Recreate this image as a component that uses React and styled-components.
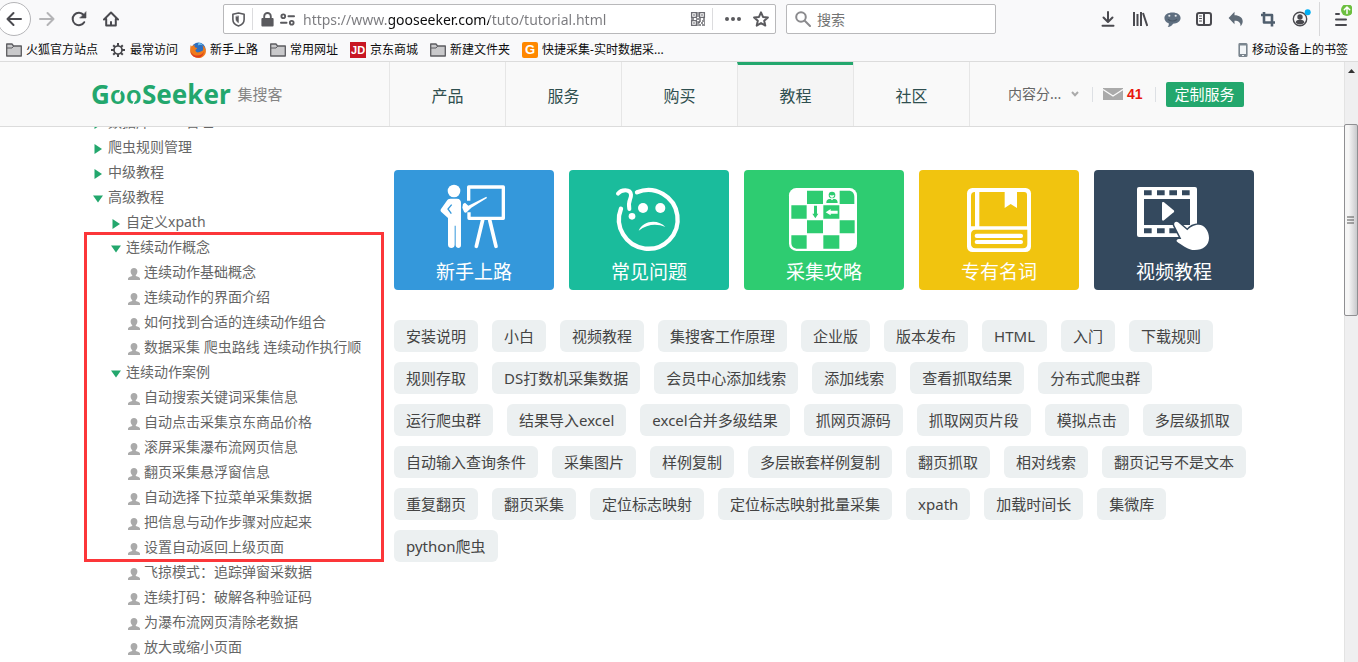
import React from "react";
import styled, { createGlobalStyle, css } from "styled-components";

const green = "#23a76d";
const uiFont = '"Noto Sans", "Noto Sans CJK SC", sans-serif';

const GlobalStyle = createGlobalStyle`
  *, *::before, *::after { box-sizing: border-box; }
  body { margin: 0; background: #fff; font-family: ${uiFont}; }
  a { color: inherit; text-decoration: none; }
  ul { list-style: none; margin: 0; padding: 0; }
  button, input, select { font-family: inherit; margin: 0; }
`;

/* ---------- browser window ---------- */

const Window = styled.div`
  display: flex;
  flex-direction: column;
  height: 100vh;
  overflow: hidden;
`;

const Toolbar = styled.div`
  display: flex;
  align-items: center;
  height: 38px;
  flex: none;
  background: #f9f9fa;
`;

const ToolButton = styled.button`
  display: flex;
  align-items: center;
  justify-content: center;
  flex: none;
  width: ${(p) => p.$width || 32}px;
  height: 34px;
  padding: 0;
  border: 0;
  background: none;
  color: ${(p) => p.$color || "#4a4a4f"};
`;

const BackButton = styled(ToolButton)`
  border: 1px solid #b5b5b8;
  border-radius: 50%;
  width: 34px;
  margin-left: -3px;
  background: #fff;
`;

const Spacer = styled.div`
  flex: 0 1 96px;
`;

const Field = styled.div`
  display: flex;
  align-items: center;
  flex: ${(p) => (p.$fixed ? "0 0 210px" : "1 1 auto")};
  min-width: 0;
  height: 30px;
  border: 1px solid #b8b8ba;
  border-radius: 2px;
  background: #fff;
  color: #5a5a5e;
  padding: 0 0 0 6px;
  margin-left: ${(p) => (p.$fixed ? 10 : 0)}px;
`;

const FieldIcon = styled.span`
  display: flex;
  justify-content: center;
  flex: none;
  width: ${(p) => p.$width || 16}px;
`;

const FieldRule = styled.span`
  flex: none;
  width: 1px;
  height: 22px;
  background: #dcdcde;
  margin: 0 6px;
`;

const TextInput = styled.input`
  flex: 1;
  min-width: 0;
  height: 28px;
  padding: 0;
  border: 0;
  outline: 0;
  background: none;
  font-size: 14px;
  &::placeholder { color: #737373; opacity: 1; }
`;

const UrlInput = styled(TextInput)`
  margin-left: 4px;
  color: transparent;
  background: linear-gradient(90deg, #7a7a7e 86px, #0c0c0d 86px, #0c0c0d 186px, #7a7a7e 186px);
  background-clip: text;
  -webkit-background-clip: text;
`;

const ToolRule = styled.span`
  width: 1px;
  height: 34px;
  margin: 0 4px 0 3px;
  background: #d8d8da;
`;

const BookmarksBar = styled.nav`
  display: flex;
  align-items: center;
  gap: 12px;
  flex: none;
  height: 24px;
  padding: 0 10px 0 6px;
  background: #f9f9fa;
  border-bottom: 1px solid #dcdcdc;
  font-size: 12px;
  line-height: 18px;
  color: #0c0c0d;
`;

const Bookmark = styled.a`
  display: flex;
  align-items: center;
  gap: 4px;
  white-space: nowrap;
  margin-left: ${(p) => (p.$end ? "auto" : 0)};
`;

const LetterIcon = styled.span`
  width: 16px;
  height: 16px;
  border-radius: ${(p) => p.$radius}px;
  background: ${(p) => p.$bg};
  color: #fff;
  font: bold ${(p) => p.$size}px/16px "Liberation Sans", sans-serif;
  text-align: center;
`;

const Viewport = styled.div`
  display: flex;
  flex: 1;
  min-height: 0;
`;

const Page = styled.div`
  display: flex;
  flex-direction: column;
  flex: 1;
  min-width: 0;
  background: #fff;
`;

const ScrollTrack = styled.div`
  display: flex;
  flex-direction: column;
  flex: none;
  width: 14px;
  background: #efeff0;
  border-left: 1px solid #e3e3e3;
`;

const ScrollArrow = styled.div`
  display: flex;
  justify-content: center;
  padding-top: 7px;
  height: 18px;
  margin-bottom: 44px;
`;

const ScrollThumb = styled.div`
  display: flex;
  align-items: center;
  justify-content: center;
  height: 192px;
  margin-left: -1px;
  border: 1px solid #8f8f92;
  border-radius: 2px;
  background: linear-gradient(90deg, #f6f6f6 30%, #c9c9cc);
`;

/* ---------- site header ---------- */

const SiteHeader = styled.header`
  flex: none;
  background: #f9f9f9;
  border-bottom: 1px solid #dcdcdc;
`;

const Container = styled.div`
  display: flex;
  width: 100%;
  max-width: 1170px;
  margin: 0 auto;
`;

const Logo = styled.a`
  display: flex;
  align-items: center;
  flex: none;
  width: 302px;
  height: 64px;
  padding-left: 4px;
  color: ${green};
  font-size: 26px;
  line-height: 40px;
  font-weight: 700;
`;

const LogoRound = styled.span`
  position: relative;
  font-weight: 600;
  svg {
    position: absolute;
    left: 0;
    bottom: 6px;
  }
`;

const LogoSub = styled.span`
  margin-left: 7px;
  color: #848484;
  font-size: 15px;
  line-height: 24px;
  font-weight: 400;
`;

const SiteNav = styled.nav`
  display: flex;
  flex: none;
  border-right: 1px solid #e6e6e6;
`;

const NavLink = styled.a`
  width: 116px;
  height: 64px;
  border-left: 1px solid #e6e6e6;
  padding-top: 3px;
  color: #2f4f4f;
  font-size: 16px;
  line-height: 62px;
  text-align: center;
  ${(p) =>
    p.$active &&
    css`
      padding-top: 0;
      border-top: 3px solid ${green};
      background: #f5f5f5;
    `}
`;

const UserTools = styled.div`
  display: flex;
  align-items: center;
  padding-left: 38px;
`;

const PickerWrap = styled.label`
  display: flex;
  align-items: center;
  width: 72px;
`;

const Picker = styled.select`
  flex: 1;
  min-width: 0;
  padding: 0;
  border: 0;
  background: none;
  appearance: none;
  color: #666;
  font-size: 14px;
  line-height: 24px;
`;

const Divider = styled.span`
  width: 1px;
  height: 15px;
  margin: 0 10px 0 12px;
  background: #dde0e4;
`;

const Mail = styled.a`
  display: flex;
  align-items: center;
  gap: 4px;
  color: #e8160c;
  font: bold 14px/20px "Liberation Sans", sans-serif;
`;

const ServiceButton = styled.button`
  width: 78px;
  height: 25px;
  padding: 0;
  border: 0;
  border-radius: 2px;
  background: ${green};
  color: #fff;
  font-size: 15px;
  line-height: 24px;
`;

/* ---------- page body ---------- */

const Main = styled(Container)`
  flex: 1;
  min-height: 0;
`;

const Sidebar = styled.aside`
  position: relative;
  flex: none;
  width: 307px;
`;

const TreeClip = styled.div`
  height: 100%;
  overflow: hidden;
`;

const Tree = styled.ul`
  margin-top: -18px;
`;

const Branch = styled.ul`
  padding-left: 18px;
`;

const Row = styled.a`
  display: flex;
  gap: 2px;
  height: 25px;
  padding-left: 3px;
  color: #666;
  font-size: 14px;
  line-height: 25px;
  white-space: nowrap;
`;

const Marker = styled.span`
  display: flex;
  align-items: center;
  justify-content: center;
  width: 16px;
  height: 25px;
  padding-top: 4px;
`;

const Highlight = styled.div`
  position: absolute;
  top: 105px;
  left: -3px;
  width: 300px;
  height: 330px;
  border: 3px solid #fc3639;
  pointer-events: none;
`;

const Content = styled.main`
  flex: 1;
  min-width: 0;
  padding-top: 43px;
`;

const Cards = styled.div`
  display: flex;
  flex-wrap: wrap;
  gap: 15px;
`;

const Card = styled.a`
  width: 160px;
  height: 120px;
  border-radius: 4px;
  background: ${(p) => p.$bg};
  color: #fff;
  font-size: 19px;
  line-height: 24px;
  text-align: center;
  svg { display: block; }
`;

const Tags = styled.div`
  display: flex;
  flex-wrap: wrap;
  gap: 10px 14px;
  margin-top: 30px;
`;

const Tag = styled.a`
  height: 32px;
  padding: 0 12px;
  border-radius: 6px;
  background: #ecf0f1;
  color: #444;
  font-size: 15px;
  line-height: 32px;
  white-space: nowrap;
`;

/* ---------- small icons ---------- */

const Icon = ({ size = 16, w, children, box = "0 0 16 16" }) => (
  <svg
    width={w || size}
    height={size}
    viewBox={box}
    fill="none"
    stroke="currentColor"
    strokeWidth="2"
    strokeLinecap="round"
    strokeLinejoin="round"
    aria-hidden="true"
  >
    {children}
  </svg>
);

const BackIcon = () => (
  <Icon><path d="M15 8H1.500M7.500 2 1.500 8l6 6" /></Icon>
);
const ForwardIcon = () => (
  <Icon><path d="M1 8h13.500M8.500 2l6 6-6 6" /></Icon>
);
const ReloadIcon = () => (
  <Icon>
    <path d="M13.200 11.200A6.200 6.200 0 1 1 12.600 4" />
    <path d="M15 1v6H9z" fill="currentColor" strokeWidth="0.600" />
  </Icon>
);
const HomeIcon = () => (
  <Icon>
    <path d="M1 8.500 8 1.500l7 7M3.200 8v6.500h9.600V8M8 11v3" />
  </Icon>
);
const ShieldIcon = () => (
  <Icon size={15}>
    <path strokeWidth="1.700" d="M8 1 14 2.500V8c0 3.500-3 6-6 7-3-1-6-3.500-6-7V2.500z" />
    <path d="M8 4.500v7c-1.500-.8-2.800-2-2.800-4V5z" fill="currentColor" strokeWidth="0.500" />
  </Icon>
);
const LockIcon = () => (
  <Icon size={15}>
    <path d="M4.500 8V4.500a3.500 3.500 0 0 1 7 0V8" />
    <rect x="2.500" y="7.500" width="11" height="7" fill="currentColor" />
  </Icon>
);
const PermissionIcon = () => (
  <Icon size={15}>
    <circle cx="3.500" cy="4.500" r="2" />
    <circle cx="12.500" cy="11.500" r="2" />
    <path d="M9 4.500h6M1 11.500h6" />
  </Icon>
);
const QrIcon = () => (
  <Icon>
    <g strokeWidth="1.300" strokeLinejoin="miter" strokeLinecap="butt" stroke="#6c6c72">
      <path d="M1.600 1.600h4.800v4.800H1.600zM9.600 1.600h4.800v4.800H9.600zM1.600 9.600h4.800v4.800H1.600z" />
      <path d="M3.300 4h1.400M11.300 4h1.400M3.300 12h1.400M8 1v5M1 8h3M6 8h5M13 8h2M9 10h2M12 10h3M8 11.500h2M11 12h2M14 12h1M9 14h2M12 14h3M8 10v5" />
    </g>
  </Icon>
);
const DotsIcon = () => (
  <Icon w={18} box="0 0 18 16">
    <g fill="currentColor" stroke="none">
      <circle cx="3" cy="8" r="2" /><circle cx="9" cy="8" r="2" /><circle cx="15" cy="8" r="2" />
    </g>
  </Icon>
);
const StarIcon = () => (
  <Icon>
    <path d="m8 1.400 2 4.500 4.900.5-3.700 3.300 1.100 4.900L8 12.100l-4.300 2.500 1.100-4.900L1.100 6.400 6 5.900z" />
  </Icon>
);
const SearchIcon = () => (
  <Icon><g stroke="#8a8a8d"><circle cx="6" cy="6" r="4.800" /><path d="m10 10 5 5" /></g></Icon>
);
const DownloadIcon = () => (
  <Icon><path d="M8 1v9.500M3.500 6.500 8 11l4.500-4.500M2.500 14.800h11" /></Icon>
);
const LibraryIcon = () => (
  <Icon><path strokeLinecap="butt" d="M2 1v14M5.500 3v12M9 1v14M11 2l4.300 13" /></Icon>
);
const ChatIcon = () => (
  <Icon size={17}>
    <path d="M8 1.500c4.300 0 7.600 2.100 7.600 5.100S12.600 12 8.500 12c-.8 1.700-2.600 3-5 3 1-1.100 1.200-2.400.9-3.500C2 10.700.4 8.900.4 6.600c0-3 3.300-5.100 7.600-5.100z" fill="#5f6f80" stroke="none" />
    <g fill="#e6eaee" stroke="none"><circle cx="5" cy="4.500" r="1" /><circle cx="11" cy="4.500" r="1" /></g>
    <path d="M4 8c2 1.800 6 1.800 8 0" stroke="#4a5866" strokeWidth="1" />
  </Icon>
);
const SidebarIcon = () => (
  <Icon>
    <rect x="1" y="2" width="14" height="12" rx="2" />
    <path d="M8 2v12" />
    <path d="M3.500 5h2M3.500 7.500h2M3.500 10h2" strokeWidth="1" />
  </Icon>
);
const UndoIcon = () => (
  <Icon>
    <path d="M6.500.8v3.400c4.800 0 8.200 2.500 8.200 6 0 2-.9 3.700-2.200 5 .3-3.600-1.700-5.500-6-5.500v3.500L.6 7z" fill="currentColor" stroke="none" />
  </Icon>
);
const CropIcon = () => (
  <Icon><path strokeLinecap="butt" strokeWidth="2.600" d="M4 1v10.500h11M1 4h11v11.500" /></Icon>
);
const AccountIcon = () => (
  <Icon w={22} box="0 0 22 20" size={20}>
    <circle cx="11" cy="10" r="6.700" strokeWidth="1.400" />
    <circle cx="11" cy="8" r="2.700" fill="currentColor" stroke="none" />
    <path d="M6.500 13.500c.5-2 2-2.700 4.500-2.700s4 .7 4.500 2.700a6 6 0 0 1-9 0z" fill="currentColor" stroke="none" />
    <circle cx="18.700" cy="3.300" r="3" fill="#00b0f4" stroke="none" />
  </Icon>
);
const MenuIcon = () => (
  <Icon w={22} box="0 0 22 28" size={28}>
    <path d="M6 9h3M6 14.500h10M6 20h10" />
    <circle cx="17" cy="5" r="6" fill="#6cbf3f" stroke="none" />
    <path d="M17 8.500v-6M14.300 4.800 17 2l2.700 2.800" stroke="#fff" strokeWidth="1.500" />
  </Icon>
);
const FolderIcon = () => (
  <Icon>
    <path d="M.7 14V2H6l1.500 2h7.800v10z" fill="#c9c9cb" stroke="#5c5c60" strokeWidth="1.300" />
    <path d="M1 6h5l1.500-1.600" stroke="#5c5c60" strokeWidth="1" />
  </Icon>
);
const GearIcon = () => (
  <Icon>
    <g stroke="#48484c">
      <circle cx="8" cy="8" r="4" strokeWidth="1.700" />
      <path strokeLinecap="butt" d="M8 1v3M8 12v3M1 8h3M12 8h3M3.200 3.200l1.800 1.800M11 11l1.800 1.800M3.200 12.800 5 11M11 5l1.800-1.800" />
    </g>
  </Icon>
);
const FirefoxIcon = () => (
  <Icon>
    <g stroke="none">
      <circle cx="8.500" cy="7.500" r="7" fill="#2d6fc0" />
      <path d="M8.500.7c2 .3 3.500 1.300 4.500 2.600-2-.9-4-.6-5.200.2z" fill="#6fc3ee" />
      <path d="M.6 3.200c.6.300 1 .8 1.200 1.300.7-.9 1.800-1.300 3-1.200-.5.800-.3 1.800.6 2.200l1.800.4c-.1 1.100-1.900 1.200-1.800 2.400 0 1.500 1.700 2.500 3.500 2 1.400-.3 2.300-1.200 3.700-1.600 1-1.700.8-3.900-.3-5.500 2.500 1.300 3.700 3.600 3.600 6.200-.2 4-3.600 6.600-7.500 6.600C4 16-.1 12.800.1 8.300c0-1.800.3-3.400.5-5.100z" fill="#ef7a1a" />
      <path d="M.5 8.500c.4 3 3.300 5.100 6.800 5 3.300-.1 5.500-1.700 6.500-4.100-.2 4-3.200 6.300-6.500 6.200C3.700 15.500.7 12.800.5 8.500z" fill="#dd3d1f" />
    </g>
  </Icon>
);
const PhoneIcon = () => (
  <Icon w={10} box="0 0 10 16">
    <rect x="1" y="1.500" width="8" height="13" rx="1" fill="#7b868f" stroke="#7b868f" strokeWidth="1.200" />
    <rect x="2" y="3.500" width="6" height="8.500" fill="#f3f6f8" stroke="none" />
    <path d="M4.500 13.500h1" stroke="#fff" strokeWidth="1" />
  </Icon>
);
const MailIcon = () => (
  <svg width="20" height="12" viewBox="0 0 20 12" aria-hidden="true">
    <rect width="20" height="12" fill="#aaa" />
    <path d="M0 1.500 10 8l10-6.500" fill="none" stroke="#f9f9f9" strokeWidth="1.400" />
  </svg>
);
const ChevronIcon = () => (
  <svg width="10" height="8" viewBox="0 0 10 8" aria-hidden="true">
    <path d="m2 2 3 3.200L8 2" fill="none" stroke="#aaa" strokeWidth="2" />
  </svg>
);
const ClosedIcon = () => (
  <svg width="8" height="10" viewBox="0 0 8 10" aria-hidden="true"><path d="M.5 0v10L8 5z" fill={green} /></svg>
);
const OpenIcon = () => (
  <svg width="10" height="8" viewBox="0 0 10 8" aria-hidden="true"><path d="M0 .5h10L5 7.500z" fill={green} /></svg>
);
const PersonIcon = () => (
  <svg width="12" height="12" viewBox="0 0 12 12" aria-hidden="true">
    <path d="M6 0c2.100 0 3.400 1.500 3.400 3.400 0 1.500-.7 2.900-1.600 3.600v1c1.900.5 4.200 1.100 4.200 2.600V12H0v-1.400C0 9.100 2.300 8.500 4.200 8V7C3.300 6.300 2.600 4.900 2.600 3.400 2.600 1.500 3.900 0 6 0z" fill="#aaa" />
  </svg>
);
const LogoSlits = () => (
  <svg width="32" height="18" viewBox="0 0 32 18" aria-hidden="true">
    <path d="M9 6 12 0M22 18l3-6" stroke="#f9f9f9" strokeWidth="1.500" />
  </svg>
);

/* ---------- card drawings ---------- */

const Drawing = ({ box, children }) => (
  <svg width="160" height="90" viewBox={box} fill="#fff" aria-hidden="true">{children}</svg>
);

const TeacherArt = () => (
  <Drawing box="12 30 480 270">
    <circle cx="192" cy="93" r="19" />
    <path d="M181 116h20c8 0 12 5 12 12v128c0 11-15 11-16 0v-59h-3v57c0 13-20 13-20 0v-84l-2-24 11 13-1 8-8 7-20-18c-3-3-3-6-1-9l17-24c3-5 6-7 11-7z" />
    <path d="M185 134 174 147l10 14" fill="none" stroke="#3498db" strokeWidth="4" />
    <path d="m219 132 6-4 10 9 54-27 2 4-47 29-14 14c-3 2-6 1-8-2l-5-12z" />
    <path d="M236 122V81h104v94H237v-18" fill="none" stroke="#fff" strokeWidth="10" strokeLinejoin="round" />
    <path d="m278 180-19 79M299 180l19 79" fill="none" stroke="#fff" strokeWidth="11" strokeLinecap="round" />
  </Drawing>
);

const QuestionArt = () => (
  <Drawing box="537 30 480 270">
    <g fill="none" stroke="#fff" strokeLinecap="round">
      <path d="M741 97a88 88 0 1 1-48 49" strokeWidth="13" />
      <path d="M684 101c9-13 37-16 39 3 1 15-10 15-5 43" strokeWidth="12" />
    </g>
    <circle cx="726" cy="169" r="10" />
    <circle cx="759" cy="144" r="15" />
    <circle cx="811" cy="144" r="15" />
    <path d="M746 212c14-34 62-34 80-11-26-12-54-9-80 11z" />
  </Drawing>
);

const BoardArt = () => (
  <Drawing box="27 30 480 270">
    <rect x="162" y="84" width="204" height="189" rx="22" />
    <g fill="#2ecc71">
      <path d="M216 92h48v40h-48zM314 92h26c13 0 18 8 18 18v22h-44zM169 136h46v40h-46zM265 136h48v40h-48zM216 181h48v39h-48zM314 181h45v39h-45zM265 226h48v40h-48zM169 226h46v40h-26c-13 0-20-7-20-18z" />
      <circle cx="291" cy="105" r="10" />
      <path d="M274 129c0-10 5-12 12-13l5 5 5-5c7 1 12 3 12 13z" />
      <path d="M237 137h9v24h4l-9 14-9-14h5z" />
    </g>
    <path d="M272 157l15-10v5h21v9h-21v5z" />
    <path d="M284 105c2 11 12 11 14 0-5 2-9 2-14 0z" />
  </Drawing>
);

const BookArt = () => (
  <Drawing box="552 30 480 270">
    <rect x="696" y="84" width="192" height="192" rx="16" />
    <g fill="#f1c40f">
      <path d="M719 96h1v103h-12V108c0-8 4-12 11-12z" />
      <path d="M733 96h76v48l18-12 19 12V96h21c7 0 9 4 9 9v94H733z" />
      <path d="M721 209h156v43c0 9-5 13-13 13H721c-9 0-13-6-13-13v-30c0-8 5-13 13-13z" />
    </g>
    <rect x="719" y="221" width="145" height="13" rx="6" />
    <rect x="719" y="240" width="145" height="12" rx="6" />
  </Drawing>
);

const VideoArt = () => (
  <Drawing box="42 180 480 270">
    <rect x="171" y="231" width="180" height="150" rx="6" />
    <g fill="#34495e">
      <path d="M192 267h138v78H192z" />
      <path d="M192 241h23v15h-23zM231 241h23v15h-23zM268 241h23v15h-23zM306 241h23v15h-23zM192 355h23v15h-23zM231 355h23v15h-23zM268 355h23v15h-23z" />
    </g>
    <path d="M246 280c0-4 3-5 6-3l29 24c2 2 2 4 0 6l-29 24c-3 2-6 1-6-3z" />
    <path
      d="M294 337c-6-5-14 1-11 9l21 41c-6-1-13 0-14 4-1 3 1 5 5 7 17 9 28 22 49 22 25 0 43-14 43-36 0-22-14-40-31-40-14 0-27 8-34 17z"
      stroke="#34495e"
      strokeWidth="9"
      paintOrder="stroke"
    />
  </Drawing>
);

/* ---------- data ---------- */

const markers = { closed: ClosedIcon, open: OpenIcon, leaf: PersonIcon };

const leaf = (text) => ({ kind: "leaf", text });

const tree = [
  { kind: "closed", text: "数据库 XML 管理" },
  { kind: "closed", text: "爬虫规则管理" },
  { kind: "closed", text: "中级教程" },
  {
    kind: "open",
    text: "高级教程",
    items: [
      { kind: "closed", text: "自定义xpath" },
      {
        kind: "open",
        text: "连续动作概念",
        items: [
          "连续动作基础概念",
          "连续动作的界面介绍",
          "如何找到合适的连续动作组合",
          "数据采集 爬虫路线 连续动作执行顺",
        ].map(leaf),
      },
      {
        kind: "open",
        text: "连续动作案例",
        items: [
          "自动搜索关键词采集信息",
          "自动点击采集京东商品价格",
          "滚屏采集瀑布流网页信息",
          "翻页采集悬浮窗信息",
          "自动选择下拉菜单采集数据",
          "把信息与动作步骤对应起来",
          "设置自动返回上级页面",
          "飞掠模式：追踪弹窗采数据",
          "连续打码：破解各种验证码",
          "为瀑布流网页清除老数据",
          "放大或缩小页面",
        ].map(leaf),
      },
    ],
  },
];

const cards = [
  { text: "新手上路", bg: "#3498db", Art: TeacherArt },
  { text: "常见问题", bg: "#1abc9c", Art: QuestionArt },
  { text: "采集攻略", bg: "#2ecc71", Art: BoardArt },
  { text: "专有名词", bg: "#f1c40f", Art: BookArt },
  { text: "视频教程", bg: "#34495e", Art: VideoArt },
];

const tags = [
  "安装说明", "小白", "视频教程", "集搜客工作原理", "企业版", "版本发布", "HTML", "入门", "下载规则",
  "规则存取", "DS打数机采集数据", "会员中心添加线索", "添加线索", "查看抓取结果", "分布式爬虫群",
  "运行爬虫群", "结果导入excel", "excel合并多级结果", "抓网页源码", "抓取网页片段", "模拟点击", "多层级抓取",
  "自动输入查询条件", "采集图片", "样例复制", "多层嵌套样例复制", "翻页抓取", "相对线索", "翻页记号不是文本",
  "重复翻页", "翻页采集", "定位标志映射", "定位标志映射批量采集", "xpath", "加载时间长", "集微库",
  "python爬虫",
];

const bookmarks = [
  { text: "火狐官方站点", icon: <FolderIcon /> },
  { text: "最常访问", icon: <GearIcon /> },
  { text: "新手上路", icon: <FirefoxIcon /> },
  { text: "常用网址", icon: <FolderIcon /> },
  { text: "京东商城", icon: <LetterIcon $bg="#c81623" $radius={0} $size={11}>JD</LetterIcon> },
  { text: "新建文件夹", icon: <FolderIcon /> },
  { text: "快捷采集-实时数据采...", icon: <LetterIcon $bg="#ff8800" $radius={2} $size={13}>G</LetterIcon> },
];

const navItems = ["产品", "服务", "购买", "教程", "社区"];

const TreeItems = ({ items }) =>
  items.map((item) => {
    const MarkerIcon = markers[item.kind];
    return (
      <li key={item.text}>
        <Row href="#">
          <Marker><MarkerIcon /></Marker>
          {item.text}
        </Row>
        {item.items && (
          <Branch><TreeItems items={item.items} /></Branch>
        )}
      </li>
    );
  });

const BrowserToolbar = () => (
  <Toolbar>
    <BackButton aria-label="后退"><BackIcon /></BackButton>
    <ToolButton aria-label="前进" $color="#b4b4b6"><ForwardIcon /></ToolButton>
    <ToolButton aria-label="刷新"><ReloadIcon /></ToolButton>
    <ToolButton aria-label="主页"><HomeIcon /></ToolButton>
    <Spacer />
    <Field>
      <FieldIcon><ShieldIcon /></FieldIcon>
      <FieldRule />
      <FieldIcon><LockIcon /></FieldIcon>
      <FieldIcon $width={24}><PermissionIcon /></FieldIcon>
      <UrlInput aria-label="网址" defaultValue="https://www.gooseeker.com/tuto/tutorial.html" />
      <FieldIcon><QrIcon /></FieldIcon>
      <FieldRule />
      <FieldIcon $width={28}><DotsIcon /></FieldIcon>
      <FieldIcon $width={28}><StarIcon /></FieldIcon>
    </Field>
    <Field $fixed>
      <FieldIcon $width={20}><SearchIcon /></FieldIcon>
      <FieldIcon $width={4} />
      <TextInput aria-label="搜索" placeholder="搜索" />
    </Field>
    <Spacer />
    <ToolButton aria-label="下载"><DownloadIcon /></ToolButton>
    <ToolButton aria-label="书库"><LibraryIcon /></ToolButton>
    <ToolButton aria-label="聊天"><ChatIcon /></ToolButton>
    <ToolButton aria-label="侧栏"><SidebarIcon /></ToolButton>
    <ToolButton aria-label="撤销" $color="#5f6b77"><UndoIcon /></ToolButton>
    <ToolButton aria-label="截图" $color="#505f6e"><CropIcon /></ToolButton>
    <ToolButton aria-label="账户"><AccountIcon /></ToolButton>
    <ToolRule />
    <ToolButton aria-label="菜单" $width={34}><MenuIcon /></ToolButton>
  </Toolbar>
);

export default function App() {
  return (
    <Window>
      <GlobalStyle />
      <BrowserToolbar />
      <BookmarksBar>
        {bookmarks.map((b) => (
          <Bookmark href="#" key={b.text}>{b.icon}{b.text}</Bookmark>
        ))}
        <Bookmark href="#" $end><PhoneIcon />移动设备上的书签</Bookmark>
      </BookmarksBar>
      <Viewport>
        <Page>
          <SiteHeader>
            <Container>
              <Logo href="#">
                <span>G<LogoRound>oo<LogoSlits /></LogoRound>Seeker</span>
                <LogoSub>集搜客</LogoSub>
              </Logo>
              <SiteNav>
                {navItems.map((n) => (
                  <NavLink href="#" key={n} $active={n === "教程"}>{n}</NavLink>
                ))}
              </SiteNav>
              <UserTools>
                <PickerWrap>
                  <Picker aria-label="用户"><option>内容分...</option></Picker>
                  <ChevronIcon />
                </PickerWrap>
                <Divider />
                <Mail href="#"><MailIcon />41</Mail>
                <Divider />
                <ServiceButton>定制服务</ServiceButton>
              </UserTools>
            </Container>
          </SiteHeader>
          <Main>
            <Sidebar>
              <TreeClip>
                <Tree><TreeItems items={tree} /></Tree>
              </TreeClip>
              <Highlight />
            </Sidebar>
            <Content>
              <Cards>
                {cards.map(({ text, bg, Art }) => (
                  <Card href="#" key={text} $bg={bg}><Art />{text}</Card>
                ))}
              </Cards>
              <Tags>
                {tags.map((t) => <Tag href="#" key={t}>{t}</Tag>)}
              </Tags>
            </Content>
          </Main>
        </Page>
        <ScrollTrack>
          <ScrollArrow>
            <svg width="7" height="4" viewBox="0 0 7 4" aria-hidden="true"><path d="M0 4 3.500 0 7 4z" fill="#333" /></svg>
          </ScrollArrow>
          <ScrollThumb>
            <svg width="8" height="8" viewBox="0 0 8 8" aria-hidden="true"><path d="M0 1h7M0 4h7M0 7h7" stroke="#555" /></svg>
          </ScrollThumb>
        </ScrollTrack>
      </Viewport>
    </Window>
  );
}
